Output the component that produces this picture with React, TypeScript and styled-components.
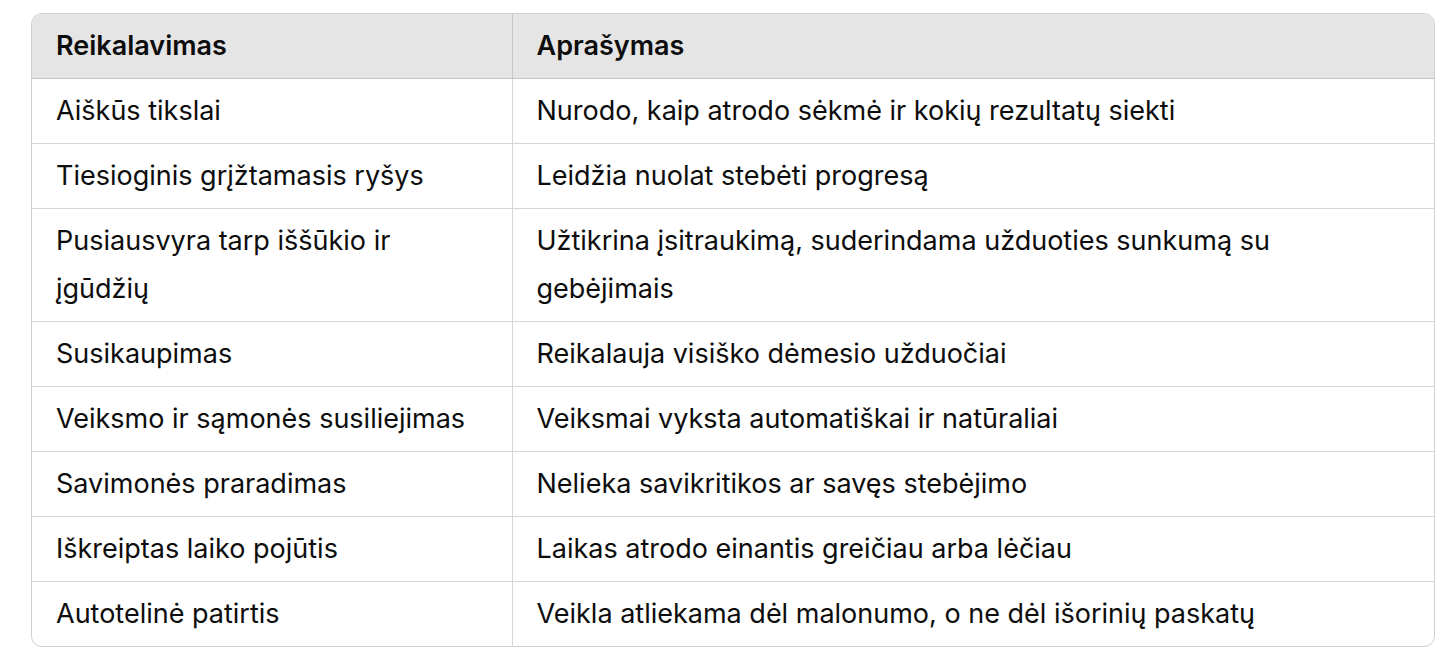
import styled, { createGlobalStyle } from 'styled-components';

const GlobalStyle = createGlobalStyle`
body {
  margin: 0;
  background: #ffffff;
  font-family: Inter, "Noto Sans", sans-serif;
  color: #0d0d0d;
}
`;

const Page = styled.div`
padding: 13px 21px 0 31px;
`;

const TableWrap = styled.div`
border: 1px solid #cfcfcf;
border-radius: 11px;
overflow: hidden;
width: 1402px;
`;

const Table = styled.table`
width: 100%;
border-collapse: collapse;
table-layout: fixed;
`;

const HeadCell = styled.th<{ first?: boolean }>`
box-sizing: border-box;
background: #e5e5e5;
text-align: left;
font-weight: 600;
font-size: 27px;
line-height: 48px;
padding: 8px 24px;
width: ${props => (props.first ? '480px' : 'auto')};
border-bottom: 1px solid #c6c6c6;
border-left: ${props => (props.first ? 'none' : '1px solid #c6c6c6')};
`;

const Cell = styled.td<{ first?: boolean }>`
font-size: 27px;
line-height: 48px;
padding: 8px 24px;
vertical-align: top;
border-left: ${props => (props.first ? 'none' : '1px solid #d6d6d6')};
`;

const Row = styled.tr`
& + & td {
  border-top: 1px solid #d6d6d6;
}
`;

const ROWS = [
    {req: "Aiškūs tikslai", desc: "Nurodo, kaip atrodo sėkmė ir kokių rezultatų siekti"},
    {req: "Tiesioginis grįžtamasis ryšys", desc: "Leidžia nuolat stebėti progresą"},
    {req: "Pusiausvyra tarp iššūkio ir įgūdžių", desc: "Užtikrina įsitraukimą, suderindama užduoties sunkumą su gebėjimais"},
    {req: "Susikaupimas", desc: "Reikalauja visiško dėmesio užduočiai"},
    {req: "Veiksmo ir sąmonės susiliejimas", desc: "Veiksmai vyksta automatiškai ir natūraliai"},
    {req: "Savimonės praradimas", desc: "Nelieka savikritikos ar savęs stebėjimo"},
    {req: "Iškreiptas laiko pojūtis", desc: "Laikas atrodo einantis greičiau arba lėčiau"},
    {req: "Autotelinė patirtis", desc: "Veikla atliekama dėl malonumo, o ne dėl išorinių paskatų"},
];

function App() {
    return (
        <>
        <GlobalStyle />
        <Page>
            <TableWrap>
                <Table>
                    <thead>
                        <tr>
                            <HeadCell first>Reikalavimas</HeadCell>
                            <HeadCell>Aprašymas</HeadCell>
                        </tr>
                    </thead>
                    <tbody>
                        {ROWS.map(row => (
                            <Row key={row.req}>
                                <Cell first>{row.req}</Cell>
                                <Cell>{row.desc}</Cell>
                            </Row>
                        ))}
                    </tbody>
                </Table>
            </TableWrap>
        </Page>
        </>
    );
}

export default App;
